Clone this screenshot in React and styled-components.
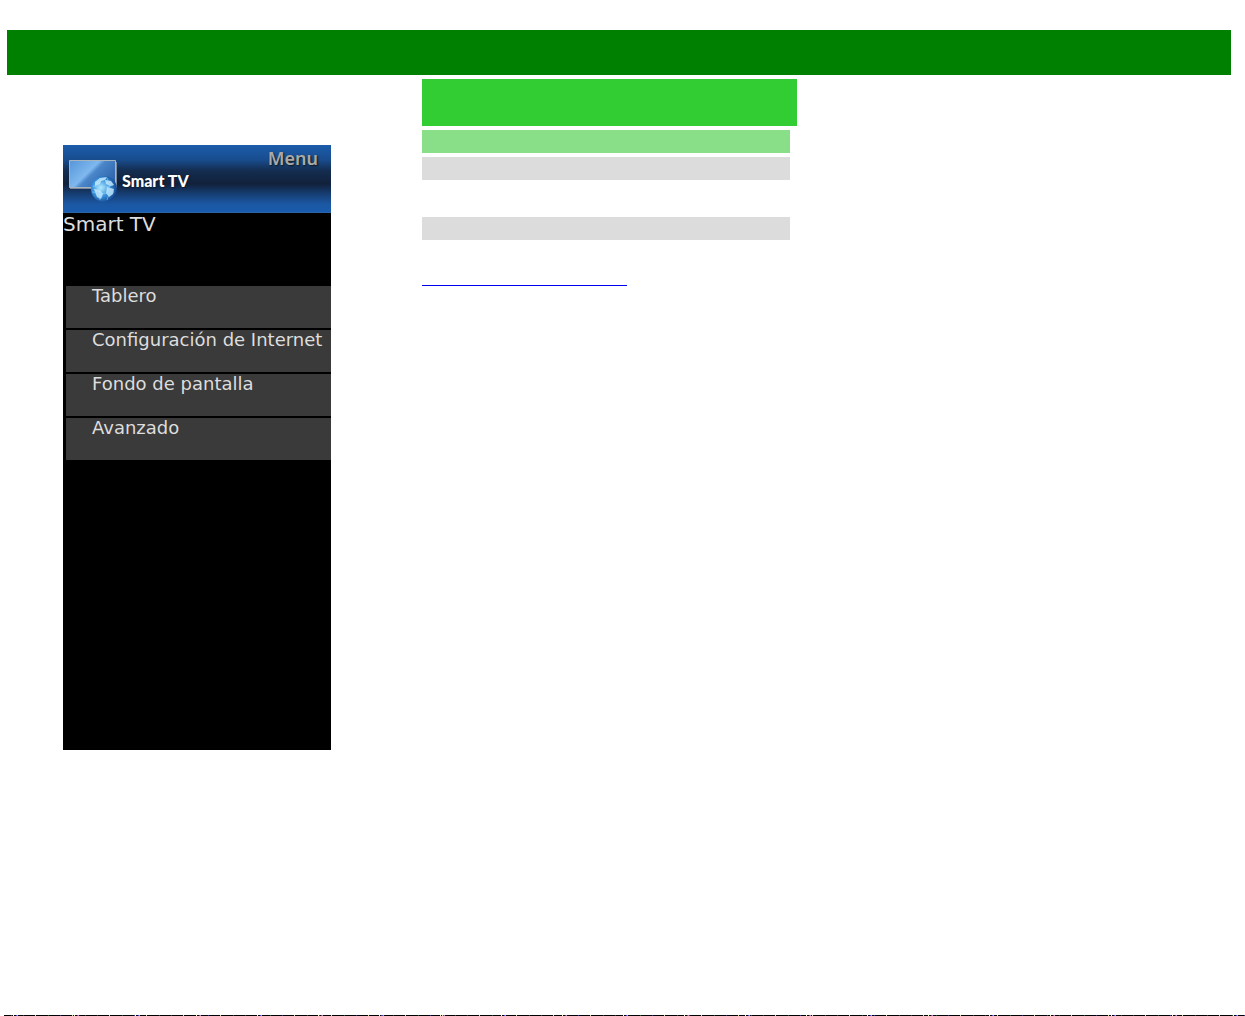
import styled, { createGlobalStyle } from 'styled-components';

const GlobalStyle = createGlobalStyle`
  * {
    box-sizing: border-box;
  }

  body {
    margin: 0;
    background: #fff;
    font-family: 'DejaVu Sans', sans-serif;
  }
`;

const Page = styled.div`
  display: flex;
  flex-direction: column;
  min-height: 100vh;
  padding-top: 30px;
`;

const TopBar = styled.header`
  height: 45px;
  margin: 0 14px 0 7px;
  background: #008000;
`;

const Content = styled.main`
  display: flex;
  flex: 1;
  align-items: flex-start;
  gap: 91px;
  padding: 4px 14px 0 63px;
`;

const TvScreen = styled.section`
  width: 268px;
  min-height: 605px;
  margin-top: 66px;
  background: #000;
  color: #ddd;
`;

const ScreenHeader = styled.div`
  display: flex;
  justify-content: space-between;
  height: 68px;
  padding: 0 13px 0 5px;
  border-bottom: 1px solid #2c63a8;
  background: linear-gradient(
    #1c5cab 0%,
    #184d8e 22%,
    #142d50 38%,
    #11213b 58%,
    #163c70 72%,
    #1b57a3 88%,
    #1a5cae 100%
  );
`;

const Brand = styled.div`
  display: flex;
  align-items: center;
  gap: 4px;
  padding-top: 4px;
  color: #fff;
  font: 900 16px/24px Lato, sans-serif;
  text-shadow: 1px 1px 2px #0a1a30;
`;

const MenuLabel = styled.div`
  color: #aaa9a7;
  font: 600 18px/26px 'Noto Sans', sans-serif;
  text-shadow: 1px 1px 2px #111;
`;

const ScreenTitle = styled.h1`
  height: 73px;
  margin: 0;
  font-size: 20px;
  font-weight: 400;
  line-height: 22px;
`;

const MenuList = styled.ul`
  display: grid;
  gap: 2px;
  margin: 0;
  padding: 0 0 0 3px;
  list-style: none;
`;

const MenuItem = styled.li`
  height: 42px;
  padding-left: 26px;
  background: #3a3a3a;
  font-size: 18px;
  line-height: 20px;
  white-space: nowrap;
`;

const Details = styled.section`
  flex: 0 1 375px;
`;

const Heading = styled.div`
  height: 47px;
  background: #32cd32;
`;

const Row = styled.div`
  height: 23px;
  margin: ${({ $spaced }) => ($spaced ? 37 : 4)}px 7px 0 0;
  background: ${({ $active }) => ($active ? '#88df88' : '#dcdcdc')};
`;

const DetailsLink = styled.a`
  display: block;
  width: 205px;
  height: 46px;
  border-bottom: 1px solid #0000ee;
`;

/* two speckle patterns of different length, so the line looks irregular */
const Footer = styled.footer`
  height: 1px;
  margin-left: 4px;
  background:
    repeating-linear-gradient(
      90deg,
      transparent 0 9px,
      #efb 9px 10px,
      transparent 10px 12px,
      #44c 12px 13px,
      #c7c 13px 14px,
      transparent 14px 61px
    ),
    repeating-linear-gradient(
      90deg,
      #000 0 7px,
      #253 7px 8px,
      #000 8px 19px,
      #338 19px 20px,
      #000 20px 31px,
      #dda 31px 32px,
      #000 32px 37px
    );
`;

const items = [
  'Tablero',
  'Configuración de Internet',
  'Fondo de pantalla',
  'Avanzado',
];

const TvIcon = () => (
  <svg width="50" height="45" viewBox="0 0 50 45" aria-hidden="true">
    <defs>
      <linearGradient id="screen" x1="0" y1="0.2" x2="1" y2="0.8">
        <stop offset="0" stopColor="#5c9bdc" />
        <stop offset="0.4" stopColor="#7fb8ee" />
        <stop offset="0.5" stopColor="#4a86c9" />
        <stop offset="1" stopColor="#2a5fa6" />
      </linearGradient>
      <radialGradient id="globe" cx="0.38" cy="0.45" r="0.65">
        <stop offset="0" stopColor="#b7edff" />
        <stop offset="0.5" stopColor="#3b95df" />
        <stop offset="1" stopColor="#0e3b82" />
      </radialGradient>
    </defs>
    <path d="M1.5 2.5H47.5V29.5H1.5Z" fill="url(#screen)" stroke="#a9b4bd" />
    <path d="M2 30.5H48.5V4" fill="none" stroke="#7c8c9c" />
    <circle cx="36" cy="31" r="13" fill="url(#globe)" />
    <path
      d="M27 24l5-4 7-1-2 3-4 1-1 3-5 2zM37 22l6 1 3 4-4 1-4-2zM39 29l7 2-1 5-4 3-3-4zM26 31l6 1 3 4-2 5-4-2z"
      fill="#cceeff"
      opacity="0.8"
    />
    <path
      d="M25 28q10 3 20-1M24 34q11 3 22 0M32 20q-5 11 0 22M39 20q5 10 0 22"
      fill="none"
      stroke="#9ad8fa"
      opacity="0.5"
    />
  </svg>
);

const App = () => {
  return (
    <>
      <GlobalStyle />
      <Page>
        <TopBar />

        <Content>
          {/* tv menu */}
          <TvScreen>
            <ScreenHeader>
              <Brand>
                <TvIcon />
                <span>Smart TV</span>
              </Brand>
              <MenuLabel>Menu</MenuLabel>
            </ScreenHeader>
            <ScreenTitle>Smart TV</ScreenTitle>
            <MenuList>
              {items.map((item) => (
                <MenuItem key={item}>{item}</MenuItem>
              ))}
            </MenuList>
          </TvScreen>

          {/* details column */}
          <Details>
            <Heading />
            <Row $active />
            <Row />
            <Row $spaced />
            <DetailsLink href="#" />
          </Details>
        </Content>

        <Footer />
      </Page>
    </>
  );
};

export default App;
